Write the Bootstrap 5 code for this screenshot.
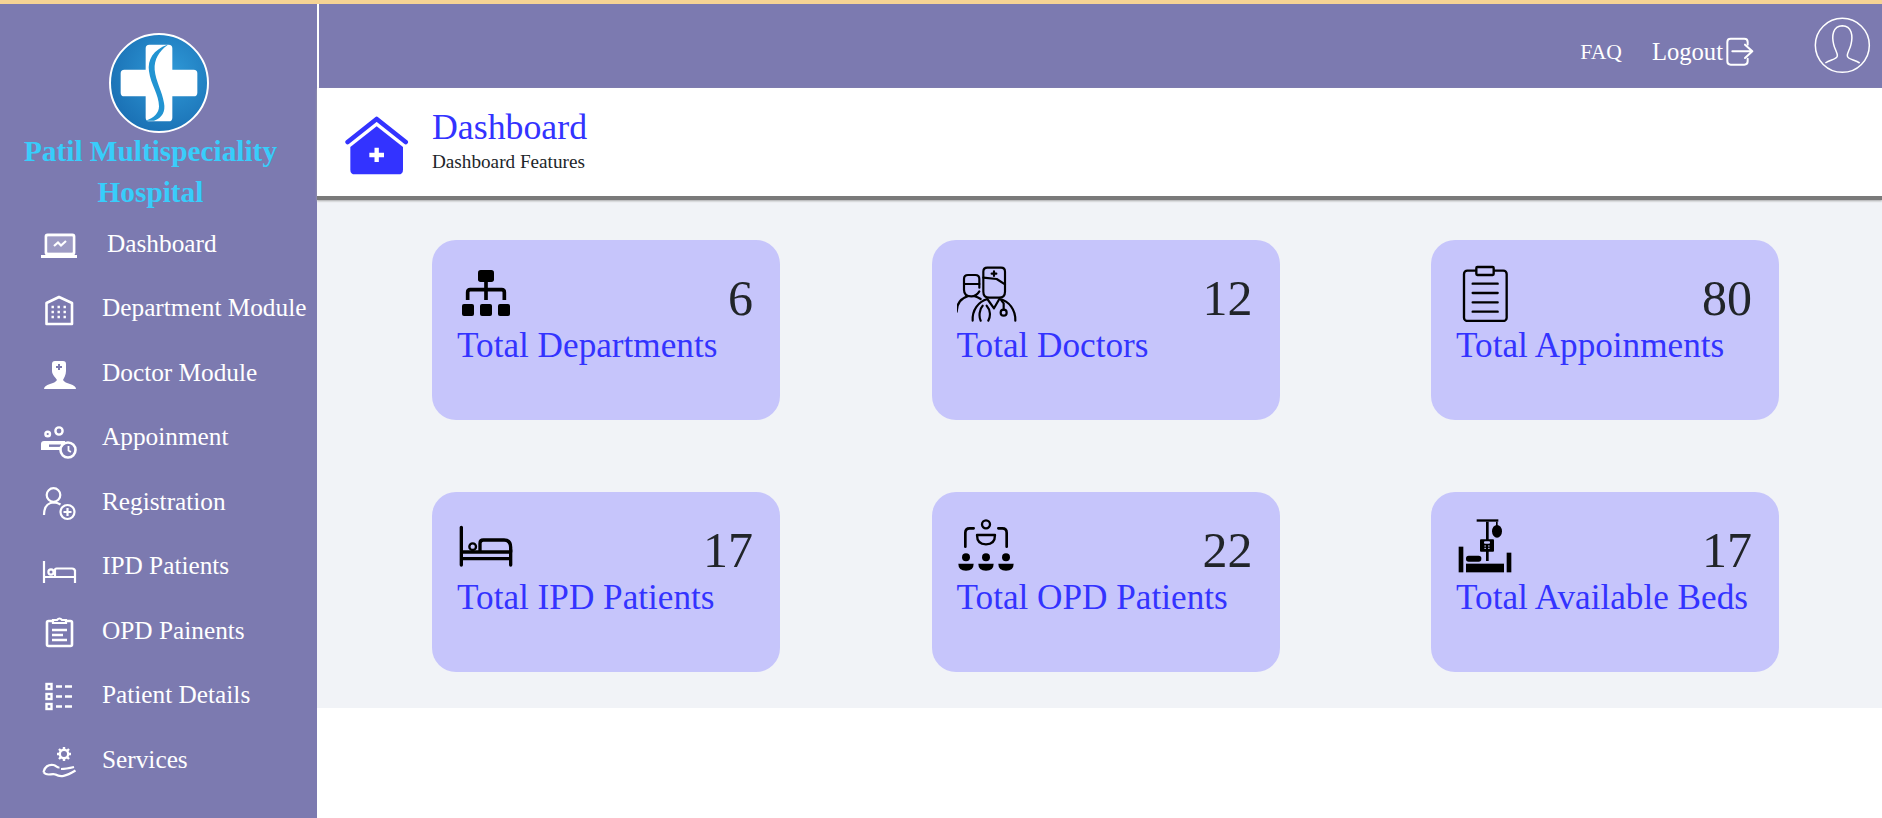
<!DOCTYPE html>
<html lang="en">
<head>
    <meta charset="UTF-8">
    <meta name="viewport" content="width=device-width, initial-scale=1.0">
    <title>Patil Multispeciality Hospital</title>
    <link rel="stylesheet" href="https://cdn.jsdelivr.net/npm/bootstrap@5.3.0/dist/css/bootstrap.min.css">
    <style>
        html, body { height: 100%; }
        body {
            font-family: "Liberation Serif", serif;
            background-color: #fff;
            border-top: 4px solid #f6d394;
            overflow: hidden;
        }
        .page-wrap { height: 814px; }
        .side-panel {
            flex: 0 0 317px;
            background-color: #7c7ab0;
            color: #fff;
        }
        .side-logo { display: block; margin: 29px auto 0; }
        .side-title {
            margin: -2px 0 2px;
            padding-right: 16px;
            font-size: 29.3px;
            font-weight: 700;
            line-height: 40.5px;
            text-align: center;
            color: #38cdfb;
        }
        .side-link {
            height: 64.5px;
            padding: 0 0 5px 39px;
            font-size: 25.3px;
            color: #fff;
            gap: 23px;
        }
        .side-link:hover, .side-link:focus { color: #fff; }
        .side-link.first-link span { margin-left: 5px; }
        .main-panel { flex: 1 1 auto; min-width: 0; }
        .top-bar {
            height: 84px;
            padding: 0 10px 0 0;
            background-color: #7c7ab0;
            border-left: 2px solid #fff;
            color: #fff;
        }
        .top-link { font-size: 21.6px; color: #fff; text-decoration: none; margin-top: 12px; }
        .top-link.logout-link { font-size: 24.6px; margin-left: 30px; gap: 2px; }
        .user-pic { margin-left: 59px; }
        .page-head {
            height: 112px;
            padding: 0 0 4px 28px;
            gap: 23px;
            background-color: #fff;
            border-bottom: 4px solid #7a7a7a;
            box-shadow: 0 1px 2px #a8a8a8;
        }
        .head-icon { margin-top: 12px; }
        .page-head h1 {
            margin: 0;
            font-size: 35.8px;
            line-height: 42px;
            color: #3333ff;
        }
        .page-head p {
            margin: 1px 0 0;
            font-size: 19.2px;
            line-height: 26px;
            color: #212529;
        }
        .stat-area {
            height: 508px;
            padding: 40px 0 0 115px;
            background-color: #f1f3f7;
        }
        .stat-grid {
            grid-template-columns: repeat(3, 348px);
            column-gap: 151.5px;
            row-gap: 72px;
        }
        .stat-box {
            height: 180px;
            padding: 22px 27px 0 25px;
            background-color: #c6c5fb;
            border: 0;
            border-radius: 24px;
        }
        .stat-num {
            margin-top: 8px;
            font-size: 50px;
            line-height: 56px;
            color: #212529;
        }
        .stat-label {
            font-size: 35.2px;
            line-height: 40px;
            color: #3333ff;
            white-space: nowrap;
        }
    </style>
</head>
<body>

    <div class="page-wrap d-flex">

        <!-- Sidebar -->
        <aside class="side-panel d-flex flex-column">
            <svg class="side-logo" width="100" height="100" viewBox="55 35 300 300">
                <defs>
                    <radialGradient id="logoBlue" cx="60%" cy="40%" r="65%">
                        <stop offset="0" stop-color="#2f9ad8"/>
                        <stop offset="1" stop-color="#1a70b4"/>
                    </radialGradient>
                </defs>
                <circle cx="205" cy="185" r="147" fill="url(#logoBlue)" stroke="#fff" stroke-width="6"/>
                <path fill="#fff" d="M176 70 H234 q11 0 11 11 V145 H309 q11 0 11 11 V214 q0 11-11 11 H245 V289 q0 11-11 11 H176 q-11 0-11-11 V225 H101 q-11 0-11-11 V156 q0-11 11-11 H165 V81 q0-11 11-11 Z"/>
                <path fill="#2294d2" d="M230 70 C188 85 170 115 175 150 C180 190 205 220 205 255 C205 275 190 290 165 298 L190 298 C215 290 225 270 220 245 C215 210 195 180 192 145 C190 115 205 90 230 72 Z"/>
            </svg>
            <h2 class="side-title">Patil Multispeciality<br>Hospital</h2>

            <nav class="nav flex-column">
                <a class="nav-link side-link first-link d-flex align-items-center" href="#">
                    <svg width="40" height="48" viewBox="0 0 40 48" fill="none" stroke="#fff" stroke-width="2.8">
                        <rect x="7" y="15" width="28" height="19" rx="1.5"/>
                        <rect x="2" y="35" width="36" height="3" fill="#fff" stroke="none"/>
                        <rect x="9" y="17" width="24" height="15" fill="#fff" fill-opacity=".25" stroke="none"/>
                        <path d="M15 26 l4-3.5 3 3 5-4.5" stroke-width="2.2"/>
                    </svg>
                    <span>Dashboard</span>
                </a>
                <a class="nav-link side-link d-flex align-items-center" href="#">
                    <svg width="40" height="48" viewBox="0 0 40 48" fill="none" stroke="#fff" stroke-width="2.6">
                        <path d="M7.5 40 V19 L20 13 L33 19 V40 Z" stroke-linejoin="round"/>
                        <path d="M12.5 23 h2.4 m3.6 0 h2.4 m3.6 0 h2.4 M12.5 28 h2.4 m3.6 0 h2.4 m3.6 0 h2.4 M12.5 33 h2.4 m3.6 0 h2.4 m3.6 0 h2.4" stroke-width="2.4"/>
                    </svg>
                    <span>Department Module</span>
                </a>
                <a class="nav-link side-link d-flex align-items-center" href="#">
                    <svg width="40" height="48" viewBox="0 0 40 48">
                        <path fill="#fff" d="M13 15 q0-3 3-3 h8 q3 0 3 3 v7 c0 4-2 7-3 9 c1 2 4 3 7 4 c4 1 6 3 6 5 H5 c0-2 2-4 6-5 c3-1 6-2 7-4 c-1-2-5-5-5-9 Z"/>
                        <path d="M20 15 v6 M17 18 h6" stroke="#7c7ab0" stroke-width="2"/>
                    </svg>
                    <span>Doctor Module</span>
                </a>
                <a class="nav-link side-link d-flex align-items-center" href="#">
                    <svg width="40" height="48" viewBox="0 0 40 48" fill="none" stroke="#fff" stroke-width="2.4">
                        <circle cx="20" cy="18" r="3.6"/>
                        <circle cx="8.7" cy="21" r="2.3"/>
                        <path fill="#fff" stroke="none" d="M5 28 H26 V37 H2 V31 q0-3 3-3 Z"/>
                        <rect x="10" y="31.5" width="12" height="2.4" fill="#7c7ab0" stroke="none"/>
                        <circle cx="29" cy="37" r="7.5" fill="#7c7ab0" stroke-width="2.6"/>
                        <path d="M29.5 33 v4.5 l2.4 1.6" stroke-width="1.8"/>
                    </svg>
                    <span>Appoinment</span>
                </a>
                <a class="nav-link side-link d-flex align-items-center" href="#">
                    <svg width="40" height="48" viewBox="0 0 40 48" fill="none" stroke="#fff" stroke-width="2.2">
                        <circle cx="14.5" cy="17" r="6.8"/>
                        <path d="M5 37 c0-8 3-12 9.5-12.5 c3 0 5 .7 7 2"/>
                        <circle cx="28.5" cy="34" r="7"/>
                        <path d="M28.5 30 v8 M24.5 34 h8"/>
                    </svg>
                    <span>Registration</span>
                </a>
                <a class="nav-link side-link d-flex align-items-center" href="#">
                    <svg width="40" height="48" viewBox="0 0 40 48" fill="none" stroke="#fff" stroke-width="2.2">
                        <path d="M5 19 V41 M5 35 H36 M36 28 V41 M16 34 V28 q0-1.5 1.5-1.5 H33 q3 0 3 3 V35"/>
                        <circle cx="12" cy="30" r="2.6"/>
                    </svg>
                    <span>IPD Patients</span>
                </a>
                <a class="nav-link side-link d-flex align-items-center" href="#">
                    <svg width="40" height="48" viewBox="0 0 40 48" fill="none" stroke="#fff" stroke-width="2.6">
                        <path d="M14 14 H9.5 q-1.5 0-1.5 1.5 V37.5 q0 1.5 1.5 1.5 H31.5 q1.5 0 1.5-1.5 V15.5 q0-1.5-1.5-1.5 H27"/>
                        <path d="M14 15 v-2 h4 q2.5-3 5 0 h4 v3 H14 Z" stroke-width="2.2"/>
                        <path d="M13 23 H28 M13 28 H24 M13 33 H28"/>
                    </svg>
                    <span>OPD Painents</span>
                </a>
                <a class="nav-link side-link d-flex align-items-center" href="#">
                    <svg width="40" height="48" viewBox="0 0 40 48" fill="none" stroke="#fff" stroke-width="2.4">
                        <rect x="7.5" y="13" width="5" height="5"/>
                        <rect x="7.5" y="23" width="5" height="5"/>
                        <rect x="7.5" y="33" width="5" height="5"/>
                        <path d="M17 15.5 h6 m3 0 h7 M17 25.5 h6 m3 0 h7 M17 35.5 h6 m3 0 h7"/>
                    </svg>
                    <span>Patient Details</span>
                </a>
                <a class="nav-link side-link d-flex align-items-center" href="#">
                    <svg width="40" height="48" viewBox="0 0 40 48" fill="none" stroke="#fff" stroke-width="2.2">
                        <circle cx="25" cy="18" r="4.2" stroke-width="2.4"/>
                        <path d="M25 11 v3 M25 22 v3 M18 18 h3 M29 18 h3 M20 13 l2 2 M28 21 l2 2 M30 13 l-2 2 M22 21 l-2 2" stroke-width="2.4"/>
                        <path d="M4.5 36 c1-5 5-8 10-7 c3 .6 3 2.8 6 2.5 M4.5 36 c3 5 8 1 12 2.5 c5 3 10 2 20-4 M22 33 c5 0 9-1 13-2"/>
                    </svg>
                    <span>Services</span>
                </a>
            </nav>
        </aside>

        <!-- Main -->
        <main class="main-panel">
            <header class="top-bar navbar justify-content-end flex-nowrap">
                <a class="top-link" href="#">FAQ</a>
                <a class="top-link logout-link d-flex align-items-center" href="#">
                    Logout
                    <svg width="30" height="30" viewBox="675 117 90 90" fill="none" stroke="#fff" stroke-width="6" stroke-linecap="round" stroke-linejoin="round">
                        <path d="M743 140 V132 q0-10-10-10 H692 q-10 0-10 10 V190 q0 10 10 10 h41 q10 0 10-10 v-8"/>
                        <path d="M697 160 H757 M735 140 L757 160 L735 180"/>
                    </svg>
                </a>
                <svg class="user-pic" width="58" height="58" viewBox="941 53 174 174" fill="none" stroke="#fff" stroke-width="4.5">
                    <circle cx="1026" cy="138" r="81"/>
                    <path d="M975 191 C990 181 1010 180 1011 170 C1012 160 1003 150 1000 135 C994 110 997 80 1026 79 C1055 80 1058 110 1052 135 C1049 150 1040 160 1041 170 C1042 180 1062 181 1078 191"/>
                </svg>
            </header>

            <section class="page-head d-flex align-items-center position-relative">
                <svg class="head-icon" width="64" height="60" viewBox="76 78 192 178">
                    <path d="M84 155 L171 86 L258 155" fill="none" stroke="#3333ff" stroke-width="14" stroke-linecap="round" stroke-linejoin="round"/>
                    <path fill="#3333ff" d="M92 170 L171 108 L250 170 V238 q0 14-14 14 H106 q-14 0-14-14 Z"/>
                    <path d="M171 172 V215 M149 194 H193" stroke="#fff" stroke-width="13"/>
                </svg>
                <div>
                    <h1 class="fw-normal">Dashboard</h1>
                    <p>Dashboard Features</p>
                </div>
            </section>

            <section class="stat-area">
                <div class="stat-grid d-grid">

                    <div class="card stat-box">
                        <div class="d-flex justify-content-between align-items-start">
                            <svg width="60" height="60" viewBox="81 81 180 180">
                                <rect x="144" y="105" width="48" height="36" rx="8"/>
                                <path d="M168 140 V195 M113 195 V172 q0-8 8-8 H215 q8 0 8 8 V195" fill="none" stroke="#000" stroke-width="11"/>
                                <rect x="96" y="207" width="36" height="36" rx="6"/>
                                <rect x="150" y="207" width="36" height="36" rx="6"/>
                                <rect x="204" y="207" width="36" height="36" rx="6"/>
                            </svg>
                            <div class="stat-num">6</div>
                        </div>
                        <div class="stat-label">Total Departments</div>
                    </div>

                    <div class="card stat-box">
                        <div class="d-flex justify-content-between align-items-start">
                            <svg width="60" height="60" viewBox="81 81 180 180" fill="none" stroke="#000" stroke-width="6.5" stroke-linecap="round" stroke-linejoin="round">
                                <path d="M160 140 V110 q0-12 12-12 h41 q12 0 12 12 V170 q0 18-18 18 h-29 q-18 0-18-18 Z"/>
                                <path d="M160 128 L200 132 L225 148"/>
                                <path d="M192 109 v14 M185 116 h14"/>
                                <path d="M128 257 C126 225 145 200 172 192 L192 220 L208 192 C238 198 257 225 256 257"/>
                                <path d="M152 257 C146 245 148 222 158 212 M175 257 C182 245 182 225 170 212"/>
                                <circle cx="221" cy="233" r="9"/>
                                <path d="M221 224 V205 L214 196"/>
                                <path d="M148 158 V132 q0-12-12-12 h-22 q-12 0-12 12 v32 q0 20 22 20 q15 0 24-15"/>
                                <path d="M102 147 H148"/>
                                <path d="M80 230 C80 208 92 190 115 183 M132 183 Q143 186 152 192"/>
                            </svg>
                            <div class="stat-num">12</div>
                        </div>
                        <div class="stat-label">Total Doctors</div>
                    </div>

                    <div class="card stat-box">
                        <div class="d-flex justify-content-between align-items-start">
                            <svg width="60" height="60" viewBox="78 81 180 180" fill="none" stroke="#000" stroke-width="7" stroke-linecap="round">
                                <rect x="102" y="107" width="128" height="151" rx="10"/>
                                <rect x="139" y="96" width="52" height="24" rx="3" fill="#c6c5fb"/>
                                <path d="M128 146 H203 M128 174 H203 M128 202 H203 M128 230 H203"/>
                            </svg>
                            <div class="stat-num">80</div>
                        </div>
                        <div class="stat-label">Total Appoinments</div>
                    </div>

                    <div class="card stat-box">
                        <div class="d-flex justify-content-between align-items-start">
                            <svg width="60" height="60" viewBox="81 72 180 180" fill="none" stroke="#000" stroke-width="10" stroke-linecap="round" stroke-linejoin="round">
                                <path d="M94 112 V225 M94 186 H242 M94 206 H242 M242 180 V225"/>
                                <path d="M150 184 V160 q0-10 10-10 H222 q20 0 20 22 V186"/>
                                <circle cx="128" cy="170" r="10" stroke-width="7"/>
                            </svg>
                            <div class="stat-num">17</div>
                        </div>
                        <div class="stat-label">Total IPD Patients</div>
                    </div>

                    <div class="card stat-box">
                        <div class="d-flex justify-content-between align-items-start">
                            <svg width="60" height="60" viewBox="81 72 180 180">
                                <g fill="none" stroke="#000" stroke-width="8" stroke-linecap="round">
                                    <circle cx="168" cy="103" r="12" stroke-width="7"/>
                                    <path d="M141 135 H195 q0 28-27 28 q-27 0-27-28 Z" stroke-width="7" stroke-linejoin="round"/>
                                    <path d="M106 170 V128 q0-13 13-13 h12 M230 170 V128 q0-13-13-13 h-12"/>
                                </g>
                                <circle cx="108" cy="202" r="12"/>
                                <circle cx="168" cy="202" r="12"/>
                                <circle cx="228" cy="202" r="12"/>
                                <path d="M85 221 H131 q0 21-23 21 q-23 0-23-21 Z"/>
                                <path d="M145 221 H191 q0 21-23 21 q-23 0-23-21 Z"/>
                                <path d="M205 221 H251 q0 21-23 21 q-23 0-23-21 Z"/>
                            </svg>
                            <div class="stat-num">22</div>
                        </div>
                        <div class="stat-label">Total OPD Patients</div>
                    </div>

                    <div class="card stat-box">
                        <div class="d-flex justify-content-between align-items-start">
                            <svg width="60" height="60" viewBox="78 72 180 180">
                                <rect x="140" y="88" width="65" height="7"/>
                                <rect x="168" y="95" width="8" height="118"/>
                                <rect x="198" y="95" width="5" height="14"/>
                                <ellipse cx="201" cy="124" rx="15" ry="19"/>
                                <rect x="150" y="148" width="42" height="37" rx="3"/>
                                <rect x="162" y="154" width="18" height="7" rx="3" fill="#c6c5fb"/>
                                <path d="M163 168 h5 m6 0 h5 M163 175 h5 m6 0 h5" stroke="#c6c5fb" stroke-width="3"/>
                                <rect x="86" y="170" width="14" height="77"/>
                                <rect x="230" y="188" width="14" height="59"/>
                                <rect x="108" y="221" width="114" height="26"/>
                                <rect x="108" y="197" width="46" height="18" rx="8"/>
                            </svg>
                            <div class="stat-num">17</div>
                        </div>
                        <div class="stat-label">Total Available Beds</div>
                    </div>

                </div>
            </section>
        </main>
    </div>

    <script src="https://cdn.jsdelivr.net/npm/bootstrap@5.3.0/dist/js/bootstrap.bundle.min.js"></script>
</body>
</html>
